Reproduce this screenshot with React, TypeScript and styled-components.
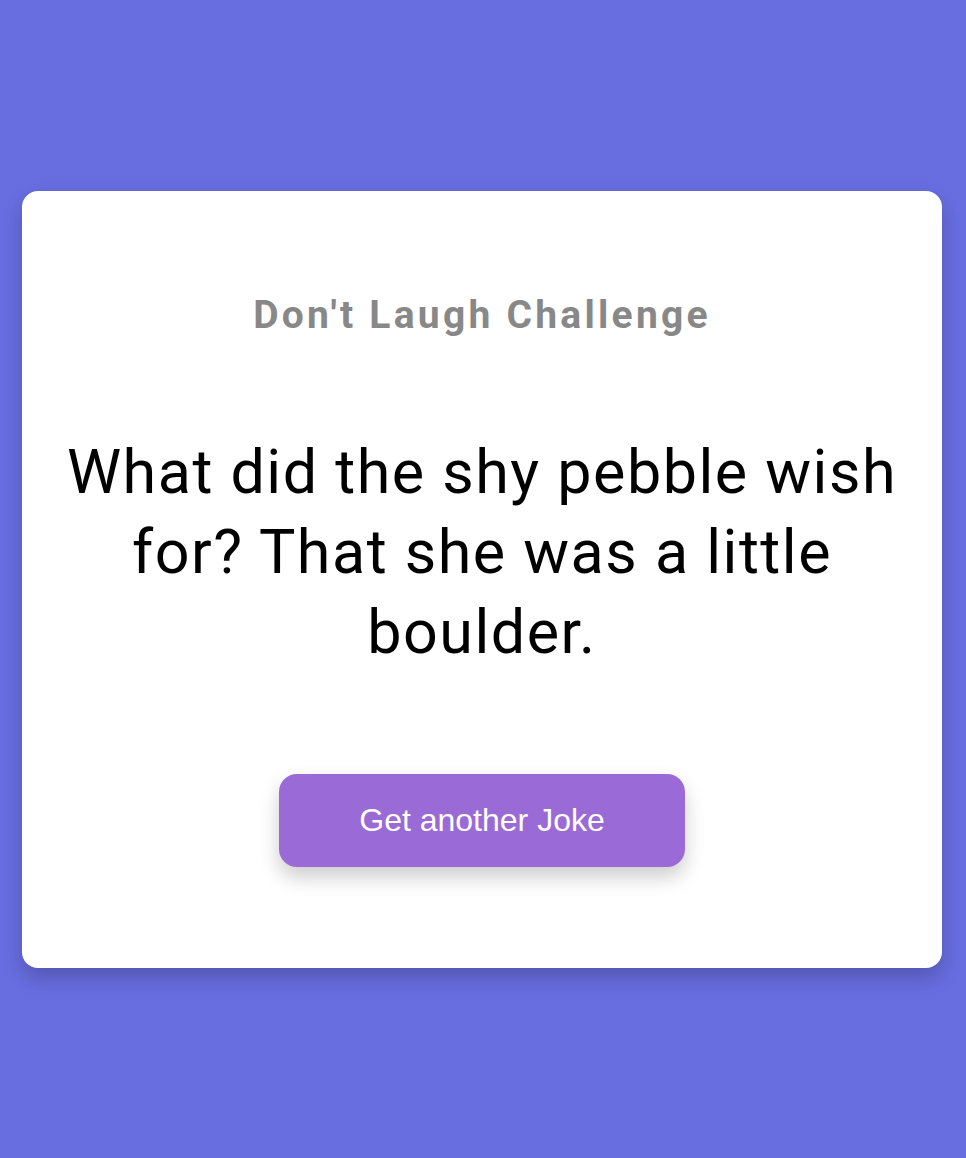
import React, { useState } from "react";
import styled, { createGlobalStyle } from "styled-components";

const GlobalStyle = createGlobalStyle`
  * {
    box-sizing: border-box;
  }
  body {
    margin: 0;
    background: #686de0;
    font-family: Roboto, "Liberation Sans", sans-serif;
  }
`;

const jokes = [
  "What did the shy pebble wish for? That she was a little boulder.",
  "Why don't skeletons fight each other? They don't have the guts.",
];

export default function App() {
  const [index, setIndex] = useState(0);

  const handleClick = () => {
    setIndex((i) => (i + 1) % jokes.length);
  };

  return (
    <Page>
      <GlobalStyle />
      <Card>
        <Title>Don't Laugh Challenge</Title>
        <Joke>{jokes[index]}</Joke>
        <Button onClick={handleClick}>Get another Joke</Button>
      </Card>
    </Page>
  );
}

const Page = styled.div`
  min-height: 100vh;
  display: flex;
  align-items: center;
  justify-content: center;
`;

const Card = styled.div`
  width: 920px;
  margin-right: 2px;
  background: #ffffff;
  border-radius: 16px;
  box-shadow: 0 10px 20px rgba(0, 0, 0, 0.2);
  padding: 101px 40px 101px;
  display: flex;
  flex-direction: column;
  align-items: center;
  text-align: center;
`;

const Title = styled.h3`
  margin: 0;
  font-size: 39px;
  font-weight: 700;
  letter-spacing: 3.25px;
  color: #888888;
`;

const Joke = styled.div`
  margin: 94px 0 102px;
  font-size: 61px;
  line-height: 80px;
  letter-spacing: 1.5px;
  color: #000000;
`;

const Button = styled.button`
  width: 406px;
  height: 93px;
  border: none;
  border-radius: 18px;
  background: #9a6ad6;
  color: #ffffff;
  font-family: "Liberation Sans", Arial, sans-serif;
  font-size: 32px;
  box-shadow: 0 10px 20px rgba(0, 0, 0, 0.2);
  cursor: pointer;
`;
